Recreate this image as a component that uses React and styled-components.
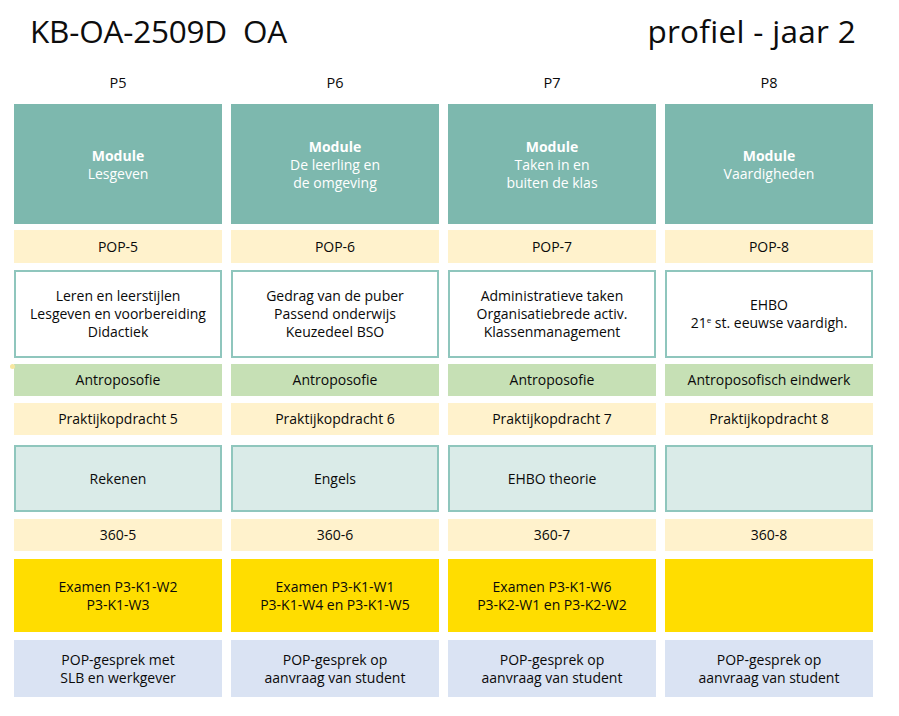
import React from "react";
import styled, { createGlobalStyle } from "styled-components";

const Global = createGlobalStyle`
  html, body { margin: 0; padding: 0; background: #ffffff; }
  body { font-family: "Open Sans", "Noto Sans", sans-serif; color: #0a0a0a; }
`;

const Page = styled.div`
  position: relative;
  width: 899px;
  height: 716px;
  padding: 0 28px 0 14px;
  box-sizing: border-box;
`;

const TitleBar = styled.header`
  display: flex;
  justify-content: space-between;
  align-items: flex-start;
  padding: 9px 15px 0 16px;
  height: 62px;
  box-sizing: border-box;
`;

const Title = styled.h1`
  margin: 0;
  font-weight: 400;
  font-size: 31.5px;
  line-height: 44px;
  white-space: pre;
  letter-spacing: ${(p) => (p.$wide ? "0.3px" : "-0.2px")};
  color: #0d0d0d;
`;

const Grid = styled.div`
  display: grid;
  grid-template-columns: repeat(4, 208px);
  column-gap: 9px;
  row-gap: 0;
`;

const PeriodLabel = styled.div`
  height: 42px;
  display: flex;
  align-items: center;
  justify-content: center;
  font-size: 14.5px;
  padding-bottom: 2px;
  box-sizing: border-box;
`;

const kinds = {
  module: { h: 120, mt: 0, bg: "#7db8ae", border: "none", color: "#ffffff" },
  pop: { h: 33, mt: 6, bg: "#fff2cc", border: "none", color: "#0a0a0a" },
  topics: { h: 88, mt: 7, bg: "#ffffff", border: "2px solid #8fc6bd", color: "#0a0a0a" },
  antro: { h: 32, mt: 6, bg: "#c6e0b5", border: "none", color: "#0a0a0a" },
  praktijk: { h: 32, mt: 7, bg: "#fff2cc", border: "none", color: "#0a0a0a" },
  subject: { h: 67, mt: 10, bg: "#daebe8", border: "2px solid #8fc6bd", color: "#0a0a0a" },
  feedback: { h: 32, mt: 7, bg: "#fff2cc", border: "none", color: "#0a0a0a" },
  exam: { h: 73, mt: 8, bg: "#ffdd00", border: "none", color: "#0a0a0a" },
  talk: { h: 57, mt: 8, bg: "#dae3f3", border: "none", color: "#0a0a0a" },
};

const Cell = styled.div`
  height: ${(p) => kinds[p.$kind].h}px;
  margin-top: ${(p) => kinds[p.$kind].mt}px;
  background: ${(p) => kinds[p.$kind].bg};
  border: ${(p) => kinds[p.$kind].border};
  color: ${(p) => kinds[p.$kind].color};
  box-sizing: border-box;
  display: flex;
  flex-direction: column;
  align-items: center;
  justify-content: center;
  text-align: center;
  font-size: 14px;
  line-height: 18px;
  padding-top: ${(p) => (p.$kind === "module" ? 2 : 0)}px;
`;

const Strong = styled.span`
  font-weight: 700;
`;

const Dot = styled.span`
  position: absolute;
  left: 10px;
  top: 364px;
  width: 5px;
  height: 5px;
  border-radius: 50%;
  background: #f7e7a0;
`;

const Sup = styled.sup`
  font-size: 8px;
  line-height: 0;
  vertical-align: 5px;
`;

const periods = ["P5", "P6", "P7", "P8"];

const rows = [
  [
    "module",
    [
      ["Lesgeven"],
      ["De leerling en", "de omgeving"],
      ["Taken in en", "buiten de klas"],
      ["Vaardigheden"],
    ],
  ],
  ["pop", [["POP-5"], ["POP-6"], ["POP-7"], ["POP-8"]]],
  [
    "topics",
    [
      ["Leren en leerstijlen", "Lesgeven en voorbereiding", "Didactiek"],
      ["Gedrag van de puber", "Passend onderwijs", "Keuzedeel BSO"],
      ["Administratieve taken", "Organisatiebrede activ.", "Klassenmanagement"],
      ["EHBO", "__21e"],
    ],
  ],
  ["antro", [["Antroposofie"], ["Antroposofie"], ["Antroposofie"], ["Antroposofisch eindwerk"]]],
  [
    "praktijk",
    [["Praktijkopdracht 5"], ["Praktijkopdracht 6"], ["Praktijkopdracht 7"], ["Praktijkopdracht 8"]],
  ],
  ["subject", [["Rekenen"], ["Engels"], ["EHBO theorie"], []]],
  ["feedback", [["360-5"], ["360-6"], ["360-7"], ["360-8"]]],
  [
    "exam",
    [
      ["Examen P3-K1-W2", "P3-K1-W3"],
      ["Examen P3-K1-W1", "P3-K1-W4 en P3-K1-W5"],
      ["Examen P3-K1-W6", "P3-K2-W1 en P3-K2-W2"],
      [],
    ],
  ],
  [
    "talk",
    [
      ["POP-gesprek met", "SLB en werkgever"],
      ["POP-gesprek op", "aanvraag van student"],
      ["POP-gesprek op", "aanvraag van student"],
      ["POP-gesprek op", "aanvraag van student"],
    ],
  ],
];

function Line({ text }) {
  if (text === "__21e") {
    return (
      <div>
        21<Sup>e</Sup> st. eeuwse vaardigh.
      </div>
    );
  }
  return <div>{text}</div>;
}

export default function App() {
  return (
    <>
      <Global />
      <Page>
        <Dot />
        <TitleBar>
          <Title>{"KB-OA-2509D  OA"}</Title>
          <Title $wide>profiel - jaar 2</Title>
        </TitleBar>
        <Grid>
          {periods.map((p) => (
            <PeriodLabel key={p}>{p}</PeriodLabel>
          ))}
          {rows.map(([kind, cells]) =>
            cells.map((lines, i) => (
              <Cell key={kind + i} $kind={kind}>
                {kind === "module" && <Strong>Module</Strong>}
                {lines.map((t, j) => (
                  <Line key={j} text={t} />
                ))}
              </Cell>
            ))
          )}
        </Grid>
      </Page>
    </>
  );
}
